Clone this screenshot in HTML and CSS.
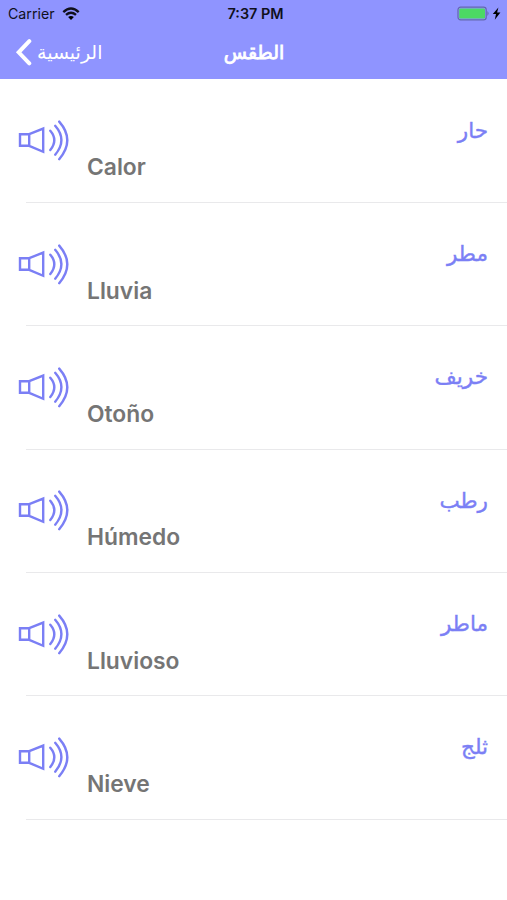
FILE: index.html
```html
<!DOCTYPE html>
<html lang="ar">
<head>
<meta charset="utf-8">
<title>الطقس</title>
<link rel="stylesheet" href="styles.css">
</head>
<body>
<svg class="defs" width="0" height="0" aria-hidden="true">
  <symbol id="speaker" viewBox="0 0 52 42">
    <path d="M2 15.2H11.2V26.8H2ZM11.2 15.2L25.2 9.6V32.8L11.2 26.8M32.3 11.7Q40.3 21 32.3 31M37.2 6.8Q49.6 21 37.2 35.7M41.2 2.6Q57.4 21 41.2 40.2"/>
  </symbol>
</svg>
<header class="header">
  <div class="status">
    <div class="carrier">
      <span>Carrier</span>
      <svg class="wifi" width="18" height="14" viewBox="0 0 18 14">
        <path class="wave" d="M1.3 5.1Q9 -1.9 16.7 5.1M4 7.9Q9 3.6 14 7.9"/>
        <path d="M6.1 10.1Q9 7.7 11.9 10.1L9 13Z"/>
      </svg>
    </div>
    <span class="time">7:37 PM</span>
    <svg class="battery" width="46" height="16" viewBox="0 0 46 16">
      <rect class="case" x="1" y="1.2" width="28.2" height="12.6" rx="2.6"/>
      <rect class="charge" x="2.2" y="2.4" width="25.8" height="10.2" rx="1.4"/>
      <path class="tip" d="M30.4 5.1Q32.8 7.5 30.4 9.9Z"/>
      <path d="M41.4 1.5L35.8 8.1H39L37.8 13.8L43.4 6.5H40.1Z"/>
    </svg>
  </div>
  <nav class="nav">
    <div class="back">
      <svg width="17" height="28" viewBox="0 0 17 28"><path d="M14.3 3.2L3.7 14.3L14.3 25.3"/></svg>
      <span dir="rtl">الرئيسية</span>
    </div>
    <h1 class="title" dir="rtl">الطقس</h1>
  </nav>
</header>
<main class="list">
  <div class="row"><svg class="speaker"><use href="#speaker"/></svg><span class="word">Calor</span><span class="arabic" dir="rtl">حار</span></div>
  <div class="row"><svg class="speaker"><use href="#speaker"/></svg><span class="word">Lluvia</span><span class="arabic" dir="rtl">مطر</span></div>
  <div class="row"><svg class="speaker"><use href="#speaker"/></svg><span class="word">Otoño</span><span class="arabic" dir="rtl">خريف</span></div>
  <div class="row"><svg class="speaker"><use href="#speaker"/></svg><span class="word">Húmedo</span><span class="arabic" dir="rtl">رطب</span></div>
  <div class="row"><svg class="speaker"><use href="#speaker"/></svg><span class="word">Lluvioso</span><span class="arabic" dir="rtl">ماطر</span></div>
  <div class="row"><svg class="speaker"><use href="#speaker"/></svg><span class="word">Nieve</span><span class="arabic" dir="rtl">ثلج</span></div>
</main>
</body>
</html>
```
FILE: styles.css
```css
* { box-sizing: border-box; }
body {
  margin: 0;
  height: 900px;
  overflow: hidden;
  background: #fff;
  font-family: Inter, "DejaVu Sans", sans-serif;
}
.defs { position: absolute; }
.header { height: 79px; background: #8f94ff; }
.status {
  display: grid;
  grid-template-columns: 1fr auto 1fr;
  align-items: center;
  height: 27px;
  padding: 0 4px 0 8px;
  font-size: 14.2px;
  color: #10101c;
}
.carrier { display: flex; align-items: center; gap: 7px; }
.wifi .wave { fill: none; stroke: #10101c; stroke-width: 2.4; }
.time { font-size: 14.4px; font-weight: 600; }
.battery { justify-self: end; }
.case { fill: none; stroke: #6468ad; stroke-width: 1.2; }
.charge { fill: #4cd964; }
.tip { fill: #6468ad; }
.nav {
  display: grid;
  grid-template-columns: 1fr auto 1fr;
  align-items: center;
  height: 50px;
  padding: 0 0 0 15px;
  color: #fff;
}
.back { display: flex; align-items: center; gap: 5px; font-size: 19px; }
.back path { fill: none; stroke: #fff; stroke-width: 4; stroke-linecap: round; }
.title {
  margin: 0 14px 0 0;
  font-size: 19px;
  font-weight: 400;
  -webkit-text-stroke: 0.8px #fff;
}
.list { padding-top: 0.8px; }
.row {
  display: grid;
  grid-template-columns: 52px 1fr auto;
  column-gap: 17px;
  height: 123.3px;
  padding: 0 19px 0 18px;
  background: linear-gradient(#e9e9eb, #e9e9eb) 26px 100% / 100% 1px no-repeat;
}
.speaker {
  width: 52px;
  height: 42px;
  margin-top: 39.6px;
  fill: none;
  stroke: #7b7ff5;
  stroke-width: 2.4;
  stroke-linecap: round;
}
.word {
  margin-top: 73.6px;
  font-size: 22.8px;
  line-height: 28px;
  font-weight: 600;
  color: #757575;
}
.arabic {
  margin-top: 36px;
  font-size: 21.5px;
  line-height: 28px;
  color: #7b7ff5;
  -webkit-text-stroke: 0.4px #7b7ff5;
}
```
